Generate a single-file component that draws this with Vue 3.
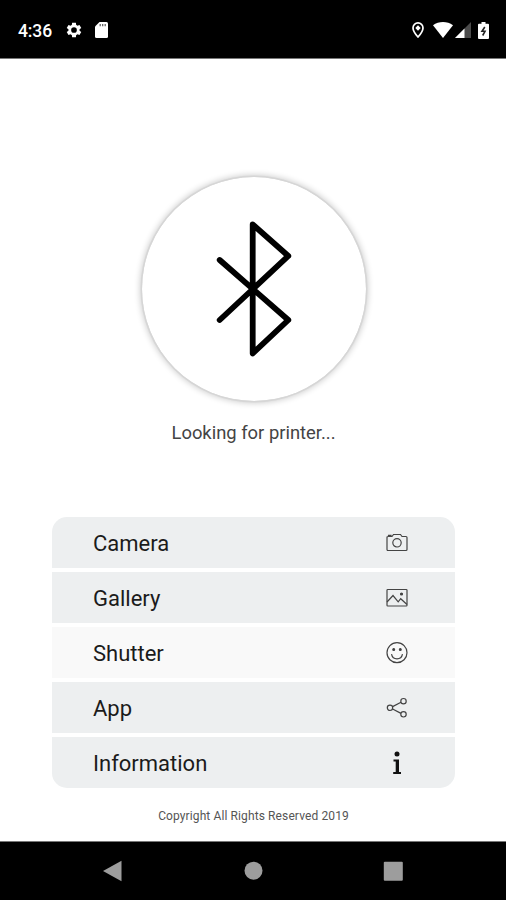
<template>
  <div class="screen">
    <header class="status-bar">
      <div class="status-left">
        <span class="clock">4:36</span>
        <svg class="gear" viewBox="0 0 24 24">
          <path d="M19.4 13a7.500 7.500 0 0 0 0-2l2.300-1.800-2.400-4-2.700 1.100a7 7 0 0 0-1.700-1L14.500 2.300h-5L9.100 5.300a7 7 0 0 0-1.700 1L4.700 5.200l-2.400 4L4.600 11a7.500 7.500 0 0 0 0 2l-2.300 1.800 2.400 4 2.700-1.100a7 7 0 0 0 1.700 1l.4 3h5l.4-3a7 7 0 0 0 1.700-1l2.700 1.100 2.400-4zM12 15.800a3.800 3.800 0 1 1 0-7.600 3.800 3.800 0 0 1 0 7.600z" />
        </svg>
        <svg class="sd-card" viewBox="0 0 13 16">
          <path d="M4.500 0H11.500A1.500 1.500 0 0 1 13 1.500V14.500A1.500 1.500 0 0 1 11.500 16H1.500A1.500 1.500 0 0 1 0 14.500V4.500z" />
          <path class="contacts" d="M5.200 2v2.300M7.700 2v2.300M10.200 2v2.300" />
        </svg>
      </div>
      <div class="status-right">
        <svg class="pin" viewBox="0 0 12 16">
          <path class="pin-body" d="M6 .9a5 5 0 0 0-5 5C1 9.300 6 15 6 15s5-5.700 5-9.100a5 5 0 0 0-5-5z" />
          <path d="M6 3.200L8.700 6 6 8.800 3.300 6z" />
        </svg>
        <svg class="wifi" viewBox="0 0 20 16">
          <path d="M0 3.200C5.800-1 14.200-1 20 3.200L10 16z" />
        </svg>
        <svg class="signal" viewBox="0 0 16 16">
          <path class="dim" d="M16 0v16H0z" />
          <path d="M9.500 6.500V16H0z" />
        </svg>
        <svg class="battery" viewBox="0 0 11 17">
          <path d="M3.500 0h4v1.700H10a1 1 0 0 1 1 1V16a1 1 0 0 1-1 1H1a1 1 0 0 1-1-1V2.700a1 1 0 0 1 1-1h2.500z" />
          <path class="bolt" d="M6.800 5L4 9.300h3L4.700 13.500" />
        </svg>
      </div>
    </header>

    <main class="content">
      <div class="bluetooth">
        <svg viewBox="0 0 224 224">
          <path d="M77.700 83L146.300 143 110.700 176.500V47.500L146.300 79 77.700 143" />
        </svg>
      </div>
      <p class="searching">Looking for printer...</p>

      <ul class="menu">
        <li
          v-for="item in items"
          :key="item.icon"
          class="menu-item"
          :class="{ pressed: item.icon === 'shutter' }"
        >
          <span class="label">{{ item.label }}</span>
          <svg class="menu-icon" viewBox="0 0 24 24">
            <g v-if="item.icon === 'camera'">
              <path d="M3 5.500h4l1.500-2h7l1.500 2h4a1 1 0 0 1 1 1v12a1 1 0 0 1-1 1H3a1 1 0 0 1-1-1v-12a1 1 0 0 1 1-1zM3.500 5.500V4.400H6v1.100" />
              <circle cx="12" cy="11.800" r="4.200" />
            </g>
            <g v-else-if="item.icon === 'gallery'">
              <rect x="2" y="3.500" width="20" height="16.500" rx=".8" />
              <path d="M2 16L8 9.500l5.200 6.300 2.500-3.100L22 18.500" />
              <circle class="solid" cx="16.500" cy="8" r="1" />
            </g>
            <g v-else-if="item.icon === 'shutter'">
              <circle cx="12" cy="11.700" r="10" />
              <path d="M6.500 13.200c.6 3 2.700 4.700 5.500 4.700s4.900-1.700 5.500-4.700" />
              <circle class="solid" cx="8.700" cy="8.500" r=".9" />
              <circle class="solid" cx="15.300" cy="8.500" r=".9" />
            </g>
            <g v-else-if="item.icon === 'app'">
              <path d="M7.600 10.600l8.400-4.300M7.600 13l8.400 4.400" />
              <circle cx="5" cy="11.800" r="2.700" />
              <circle cx="18.500" cy="5.200" r="2.700" />
              <circle cx="18.500" cy="18.300" r="2.700" />
            </g>
            <g v-else class="info">
              <circle cx="12" cy="3" r="2.500" />
              <path d="M8.500 8.500h5.500v12.600H16v2H8.200v-2h2.500V10.500H8.500z" />
            </g>
          </svg>
        </li>
      </ul>

      <p class="copyright">Copyright All Rights Reserved 2019</p>
    </main>

    <nav class="nav-bar">
      <svg viewBox="0 0 20 22"><path d="M1 11L19.500 .7V21.300z" /></svg>
      <svg viewBox="0 0 20 22"><circle cx="10.500" cy="10.700" r="9" /></svg>
      <svg viewBox="0 0 20 22"><rect x=".8" y="1.700" width="19" height="19" rx="1" /></svg>
    </nav>
  </div>
</template>

<script setup>
const items = [
  { label: 'Camera', icon: 'camera' },
  { label: 'Gallery', icon: 'gallery' },
  { label: 'Shutter', icon: 'shutter' },
  { label: 'App', icon: 'app' },
  { label: 'Information', icon: 'info' }
];
</script>

<style>
body {
  margin: 0;
}
</style>

<style scoped>
.screen {
  display: flex;
  flex-direction: column;
  width: 506px;
  height: 900px;
  overflow: hidden;
  background: #fff;
  color: #1b1b1b;
  font-family: Roboto, "Liberation Sans", sans-serif;
}

svg {
  display: block;
  flex: none;
}

.status-bar {
  box-sizing: border-box;
  display: flex;
  justify-content: space-between;
  height: 59px;
  padding: 0 16px 0 18px;
  border-bottom: 1px solid #777;
  background: #000;
  color: #fff;
  fill: #fff;
}

.status-left,
.status-right {
  display: flex;
  align-items: center;
  height: 60px;
}

.clock {
  width: 47px;
  font-size: 17.500px;
  font-weight: 500;
  line-height: 20px;
  letter-spacing: -0.1px;
  padding-top: 2px;
}

.gear {
  width: 18px;
  height: 18px;
  margin-right: 12px;
}

.sd-card {
  width: 13px;
  height: 16px;
}

.contacts {
  stroke: #555;
  stroke-width: 1.200;
}

.pin {
  width: 12px;
  height: 16px;
  margin-right: 9px;
}

.pin-body {
  fill: none;
  stroke: #fff;
  stroke-width: 1.700;
}

.wifi {
  width: 20px;
  height: 16px;
  margin-right: 2px;
}

.signal {
  width: 16px;
  height: 16px;
  margin-right: 7px;
}

.dim {
  fill: #4b4b4b;
}

.battery {
  width: 11px;
  height: 17px;
}

.status-right {
  margin-right: 1px;
}

.bolt {
  fill: none;
  stroke: #222;
  stroke-width: 1.600;
}

.content {
  display: flex;
  flex: 1;
  flex-direction: column;
  align-items: center;
}

.bluetooth {
  width: 224px;
  height: 224px;
  margin: 118px 0 0 2px;
  border-radius: 50%;
  box-shadow: 0 0 0 1.500px #d6d6d6, 0 0 6px 2px rgba(0, 0, 0, 0.2);
}

.bluetooth path {
  fill: none;
  stroke: #000;
  stroke-width: 5.800;
  stroke-linecap: round;
  stroke-linejoin: round;
}

.searching {
  margin: 20px 0 0 1px;
  font-size: 18.400px;
  line-height: 24px;
  color: #444;
}

.menu {
  display: flex;
  flex-direction: column;
  gap: 4px;
  width: 403px;
  margin: 72px 0 0 1px;
  padding: 0;
  overflow: hidden;
  border-radius: 15px;
  list-style: none;
}

.menu-item {
  box-sizing: border-box;
  display: flex;
  align-items: center;
  justify-content: space-between;
  height: 51px;
  padding: 0 46px 0 41px;
  background: #edeff0;
  font-size: 22px;
}

.label {
  padding-top: 2px;
}

.pressed {
  background: #f9f9f9;
}

.menu-icon {
  width: 24px;
  height: 24px;
  fill: none;
  stroke: #444;
  stroke-width: 1.200;
}

.solid {
  fill: #333;
}

.info {
  fill: #111;
  stroke: none;
}

.copyright {
  margin: 20px 0 0 1px;
  font-size: 12px;
  line-height: 16px;
  letter-spacing: 0.11px;
  color: #555;
}

.nav-bar {
  box-sizing: border-box;
  display: flex;
  justify-content: space-between;
  height: 59px;
  padding: 18px 103px 0 102px;
  border-top: 1px solid #777;
  background: #000;
  fill: #9d9d9d;
}

.nav-bar svg {
  width: 20px;
  height: 22px;
}
</style>
